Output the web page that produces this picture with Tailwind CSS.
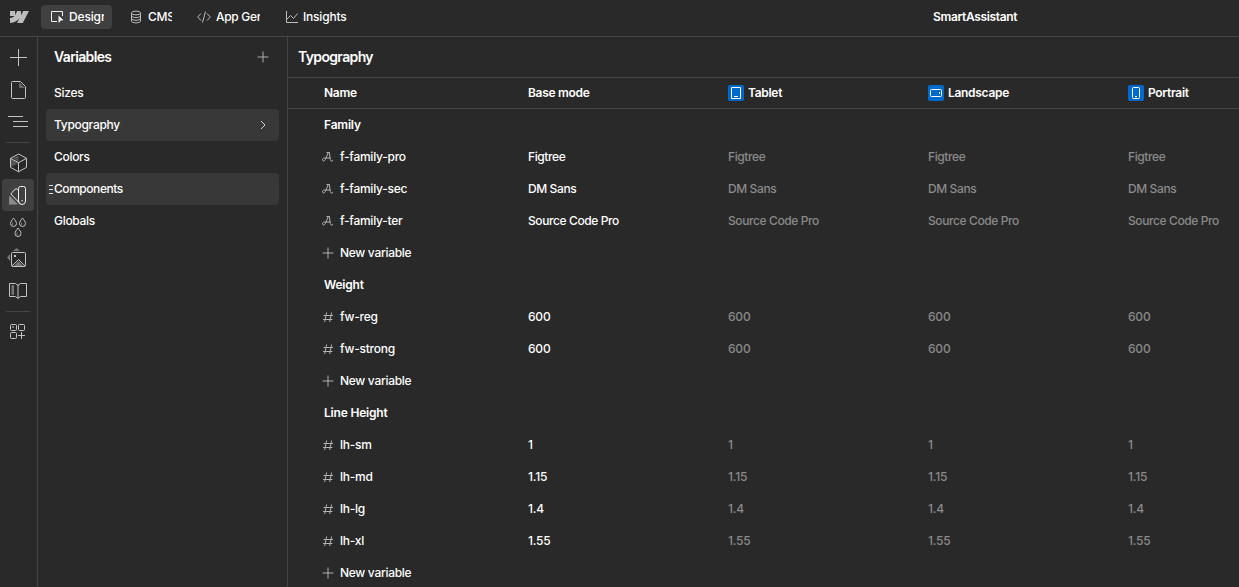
<!DOCTYPE html>
<html lang="en">
<head>
  <meta charset="UTF-8">
  <meta name="viewport" content="width=device-width, initial-scale=1.0">
  <title>SmartAssistant - Variables</title>
  <script src="https://cdn.jsdelivr.net/npm/@tailwindcss/browser@4"></script>
</head>
<body class="h-screen flex flex-col overflow-hidden bg-[#292929] text-white font-['Inter',sans-serif] text-[12px] leading-4 font-medium tracking-[-0.3px]">
  <!-- Top bar -->
  <header class="h-[37px] shrink-0 flex items-center border-b border-[#454545] pb-[2px]">
    <svg class="ml-[9px] w-5 h-3 text-[#bdbdbd]" viewBox="0 0 20 12" fill="currentColor"><path d="M20 0 13.8 12H8l2.6-5C8.500 9.800 5.300 11.600 1 12V7.100s2.900-.2 4.600-2H1V0h5.100v4.200L8.200 0H12v4.200L14.200 0Z"/></svg>
    <nav class="flex items-center">
      <a class="ml-3 w-[71px] h-6 flex items-center rounded bg-[#404040] pl-[9px]">
        <svg class="w-4 h-4 shrink-0" viewBox="0 0 16 16" fill="none"><path d="M7 12.500H1.500v-10h11V7" stroke="#f0f0f0"/><path d="M8.500 6.500 13.600 11.300 11.100 11.400 8.500 13.900Z" fill="#f0f0f0"/></svg>
        <span class="ml-[3px] w-[35px] overflow-hidden whitespace-nowrap tracking-[-0.15px]">Design</span>
      </a>
      <a class="ml-4 flex items-center">
        <svg class="w-4 h-4 text-[#bdbdbd]" viewBox="0 0 16 16" fill="none" stroke="currentColor"><ellipse cx="8" cy="4" rx="4.500" ry="1.900"/><path d="M3.500 4v8c0 1 2 1.900 4.500 1.900s4.500-.9 4.500-1.900V4M3.500 6.700c0 1 2 1.900 4.500 1.900s4.500-.9 4.500-1.900M3.500 9.400c0 1 2 1.900 4.500 1.900s4.500-.9 4.500-1.900"/></svg>
        <span class="ml-1 w-6 overflow-hidden whitespace-nowrap">CMS</span>
      </a>
      <a class="ml-6 flex items-center">
        <svg class="w-4 h-4 text-[#bdbdbd]" viewBox="0 0 16 16" fill="none" stroke="currentColor"><path d="M5 4.500 1.700 8 5 11.500M11 4.500 14.300 8 11 11.500M9.500 2.500l-3 11"/></svg>
        <span class="ml-1 w-11 overflow-hidden whitespace-nowrap">App Gen</span>
      </a>
      <a class="ml-6 flex items-center">
        <svg class="w-4 h-4 text-[#bdbdbd]" viewBox="0 0 16 16" fill="none" stroke="currentColor"><path d="M2.500 2v11.500H14M2.500 10.500 6.500 6.500l3 3L13.500 4.500"/></svg>
        <span class="ml-[3px] w-[43px] whitespace-nowrap tracking-[-0.2px]">Insights</span>
      </a>
    </nav>
    <h1 class="ml-[587px] font-semibold tracking-[-0.35px]">SmartAssistant</h1>
  </header>

  <div class="flex-1 min-h-0 flex">
    <!-- Icon rail -->
    <aside class="w-[38px] shrink-0 border-r border-[#454545] flex flex-col items-center pr-px pt-1 text-[#c4c4c4]">
      <button class="w-8 h-8 flex items-center justify-center">
        <svg class="w-6 h-6" viewBox="0 0 24 24" fill="none" stroke="currentColor"><path d="M12.500 4v17M4 12.500h17"/></svg>
      </button>
      <button class="w-8 h-8 flex items-center justify-center">
        <svg class="w-6 h-6" viewBox="0 0 24 24" fill="none" stroke="currentColor"><path d="M13 5v6h6Z" fill="#666" stroke="none"/><path d="M6.500 4.500h8l5 5v11a1 1 0 0 1-1 1h-12a1 1 0 0 1-1-1v-15a1 1 0 0 1 1-1Z"/></svg>
      </button>
      <button class="w-8 h-8 flex items-center justify-center">
        <svg class="w-6 h-6" viewBox="0 0 24 24" fill="none" stroke="currentColor"><path d="M2 7.500h15M7 12.500h15M7 17.500h15"/></svg>
      </button>
      <div class="w-6 h-px mt-[5px] mb-1 bg-[#454545]"></div>
      <button class="w-8 h-8 flex items-center justify-center">
        <svg class="w-6 h-6" viewBox="0 0 24 24" fill="none" stroke="currentColor"><path d="M5 8l7.500 4L5 16ZM7 7l5.500-2.500V11Z" fill="#555" stroke="none"/><path d="M12.500 3 20.500 7.300v9l-8 4.500-8-4.500v-9ZM4.500 7.300l8 4.400 8-4.400M12.500 11.700v9"/></svg>
      </button>
      <button class="w-8 h-8 flex items-center justify-center rounded bg-[#404040] text-[#f0f0f0]">
        <svg class="w-6 h-6" viewBox="0 0 24 24" fill="none" stroke="currentColor"><path d="M3 13.500v8h9L4 13Z" fill="#8a8a8a" stroke="none"/><path d="M12.500 18V5.500a2 2 0 0 1 2-2h3a2 2 0 0 1 2 2V18a3.500 3.500 0 0 1-7 0ZM12.500 7.500l-1.200-1.200a1.500 1.500 0 0 0-2.200 0L5.700 9.700a1.500 1.500 0 0 0 0 2.200l8 8.400"/><path d="M15.500 17h1.200v1.200h-1.200Z" fill="currentColor" stroke="none"/></svg>
      </button>
      <button class="w-8 h-8 -mt-px flex items-center justify-center">
        <svg class="w-6 h-6" viewBox="0 0 24 24" fill="none" stroke="currentColor"><path d="M7.500 4C6 6.200 4.500 7.700 4.500 9.500a3 3 0 0 0 6 0c0-1.800-1.500-3.300-3-5.500ZM16.500 4c-1.500 2.200-3 3.700-3 5.500a3 3 0 0 0 6 0c0-1.800-1.500-3.300-3-5.500ZM12 14c-1.500 2.200-3 3.700-3 5.500a3 3 0 0 0 6 0c0-1.800-1.500-3.300-3-5.500Z"/><path d="M6.500 8.500V11M15.500 8.500V11M11 18.500V21" stroke="#777"/></svg>
      </button>
      <button class="w-8 h-8 flex items-center justify-center">
        <svg class="w-6 h-6" viewBox="0 0 24 24" fill="none" stroke="currentColor"><path d="M10.500 2 14 5H7ZM1 11.500 4 8v7ZM8 20l4.500-5L17 20Z" fill="#777" stroke="none"/><path d="M6.500 6.500h12a1 1 0 0 1 1 1v12a1 1 0 0 1-1 1h-12a1 1 0 0 1-1-1v-12a1 1 0 0 1 1-1ZM6 20l6.500-6.500L19 20"/><path d="M8 9h2v2H8Z" fill="currentColor" stroke="none"/></svg>
      </button>
      <button class="w-8 h-8 flex items-center justify-center">
        <svg class="w-6 h-6" viewBox="0 0 24 24" fill="none" stroke="currentColor"><path d="M6 7.500h1.500v9H6Z" fill="#777" stroke="#777"/><path d="M12 6.500V20M3.500 5.500h6L12 7.500l2.500-2h6v13h-6L12 20.500l-2.500-2h-6Z"/></svg>
      </button>
      <div class="w-6 h-px mt-[5px] mb-1 bg-[#454545]"></div>
      <button class="w-8 h-8 flex items-center justify-center">
        <svg class="w-6 h-6" viewBox="0 0 24 24" fill="none" stroke="currentColor"><rect x="4.500" y="4.500" width="6" height="6" rx="1"/><rect x="12.500" y="4.500" width="6" height="6" rx="1"/><rect x="4.500" y="12.500" width="6" height="6" rx="1"/><path d="M15.500 12v7M12 15.500h7"/><path d="M6 6h2v2H6Z" fill="#777" stroke="none"/></svg>
      </button>
    </aside>

    <!-- Variable collections -->
    <section class="w-[250px] shrink-0 border-r border-[#454545] px-2">
      <div class="h-10 flex items-center justify-between px-2">
        <h2 class="text-[14px] font-semibold tracking-[-0.65px]">Variables</h2>
        <svg class="w-4 h-4 text-[#b0b0b0]" viewBox="0 0 16 16" fill="none" stroke="currentColor"><path d="M8 2.500v11M2.500 8h11"/></svg>
      </div>
      <ul>
        <li class="h-8 flex items-center px-2">Sizes</li>
        <li class="h-8 flex items-center justify-between px-2 rounded bg-[#383838]">Typography
          <svg class="w-4 h-4 text-[#d0d0d0]" viewBox="0 0 16 16" fill="none" stroke="currentColor"><path d="M6 4l4 4-4 4"/></svg>
        </li>
        <li class="h-8 flex items-center px-2">Colors</li>
        <li class="h-8 flex items-center pr-2 rounded bg-[#383838] tracking-[-0.45px]">
          <svg class="w-2 h-4 text-[#e0e0e0]" viewBox="0 0 8 16" fill="none" stroke="currentColor"><path d="M3 4.500h4M3 8.500h4M3 12.500h4"/></svg>Components
        </li>
        <li class="h-8 flex items-center px-2">Globals</li>
      </ul>
    </section>

    <!-- Variables table -->
    <main class="flex-1 min-w-0 overflow-hidden">
      <h2 class="h-[41px] flex items-center px-[10px] border-b border-[#454545] text-[14px] font-semibold tracking-[-0.65px]">Typography</h2>
      <div class="h-[31px] grid grid-cols-[204px_200px_200px_200px_200px] items-center border-b border-[#454545] pl-9 font-semibold">
        <span>Name</span>
        <span>Base mode</span>
        <span class="flex items-center gap-1">
          <svg class="w-4 h-4" viewBox="0 0 16 16" fill="none" stroke="#fff"><rect width="16" height="16" rx="2" fill="#006acc" stroke="none"/><path d="M3.500 2.500h9v11h-9ZM6 11.500h4"/></svg>Tablet
        </span>
        <span class="flex items-center gap-1">
          <svg class="w-4 h-4" viewBox="0 0 16 16" fill="none" stroke="#fff"><rect width="16" height="16" rx="2" fill="#006acc" stroke="none"/><rect x="2.500" y="4.500" width="11" height="7" rx="1"/><path d="M11.500 7v2"/></svg>Landscape
        </span>
        <span class="flex items-center gap-1">
          <svg class="w-4 h-4" viewBox="0 0 16 16" fill="none" stroke="#fff"><rect width="16" height="16" rx="2" fill="#006acc" stroke="none"/><rect x="4.500" y="2.500" width="7" height="11" rx="1"/><path d="M7 11.500h2"/></svg>Portrait
        </span>
      </div>
      <div id="groups"></div>
    </main>
  </div>

  <script>
    const icons = {
      font: '<path d="M2.500 10.500C2.500 9.200 3.800 9 5.500 9h5.200M2.500 10.500c0 1.900 2 1.900 2.700.2L8.300 3.500h1l1 7c.2 1.500 1 2 2.700 1.200M6.500 3.500h3"/>',
      number: '<path d="M6.600 3.500l-2 9.500M11.600 3.500l-2 9.500M3.500 6.500h9.500M3 10.500h9.500"/>',
      plus: '<path d="M8 2.500v11M2.500 8h11"/>',
    };
    const groups = [
      { title: 'Family', icon: 'font', rows: [['f-family-pro', 'Figtree'], ['f-family-sec', 'DM Sans'], ['f-family-ter', 'Source Code Pro']] },
      { title: 'Weight', icon: 'number', rows: [['fw-reg', '600'], ['fw-strong', '600']] },
      { title: 'Line Height', icon: 'number', rows: [['lh-sm', '1'], ['lh-md', '1.15'], ['lh-lg', '1.4'], ['lh-xl', '1.55']] },
    ];
    const icon = (name) => `<svg class="w-4 h-4 -ml-1 mr-1 text-[#b0b0b0]" viewBox="0 0 16 16" fill="none" stroke="currentColor">${icons[name]}</svg>`;

    document.getElementById('groups').innerHTML = groups.map(group => `
      <h3 class="h-8 flex items-center pl-9 font-semibold tracking-[-0.2px]">${group.title}</h3>
      ${group.rows.map(([name, value]) => `
        <div class="h-8 grid grid-cols-[204px_200px_200px_200px_200px] items-center pl-9 ${group.icon === 'font' ? 'tracking-[-0.4px]' : 'tracking-[-0.2px]'}">
          <span class="flex items-center tracking-[-0.25px]">${icon(group.icon)}${name}</span>
          <span>${value}</span>
          <span class="text-[#8a8a8a]">${value}</span>
          <span class="text-[#8a8a8a]">${value}</span>
          <span class="text-[#8a8a8a]">${value}</span>
        </div>
      `).join('')}
      <div class="h-8 flex items-center pl-9">${icon('plus')}New variable</div>
    `).join('');
  </script>
</body>
</html>
